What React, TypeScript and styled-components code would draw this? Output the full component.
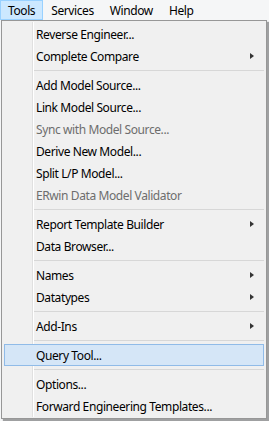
import React from "react";
import styled, { createGlobalStyle } from "styled-components";

type Entry =
  | { kind: "sep" }
  | { kind: "item"; label: string; sub?: boolean; disabled?: boolean; active?: boolean };

const entries: Entry[] = [
  { kind: "item", label: "Reverse Engineer..." },
  { kind: "item", label: "Complete Compare", sub: true },
  { kind: "sep" },
  { kind: "item", label: "Add Model Source..." },
  { kind: "item", label: "Link Model Source..." },
  { kind: "item", label: "Sync with Model Source...", disabled: true },
  { kind: "item", label: "Derive New Model..." },
  { kind: "item", label: "Split L/P Model..." },
  { kind: "item", label: "ERwin Data Model Validator", disabled: true },
  { kind: "sep" },
  { kind: "item", label: "Report Template Builder", sub: true },
  { kind: "item", label: "Data Browser..." },
  { kind: "sep" },
  { kind: "item", label: "Names", sub: true },
  { kind: "item", label: "Datatypes", sub: true },
  { kind: "sep" },
  { kind: "item", label: "Add-Ins", sub: true },
  { kind: "sep" },
  { kind: "item", label: "Query Tool...", active: true },
  { kind: "sep" },
  { kind: "item", label: "Options..." },
  { kind: "item", label: "Forward Engineering Templates..." },
];

const GlobalStyle = createGlobalStyle`
  html, body {
    margin: 0;
    padding: 0;
    background: #f5f6f7;
    font-family: "Noto Sans", "Noto Sans CJK KR", sans-serif;
    font-size: 12px;
    letter-spacing: -0.4px;
  }
`;

const Page = styled.div`
  width: 269px;
  height: 421px;
  overflow: hidden;
  background: #f5f6f7;
`;

const MenuBar = styled.div`
  display: flex;
  height: 20px;
  background: #f5f6f7;
`;

const BarItem = styled.div<{ $open?: boolean }>`
  box-sizing: border-box;
  height: 20px;
  padding: 0 7px;
  display: flex;
  align-items: center;
  color: #000;
  background: ${(p) => (p.$open ? "#cce8ff" : "transparent")};
  border: 1px solid ${(p) => (p.$open ? "#99d1ff" : "transparent")};
`;

const Popup = styled.div`
  box-sizing: border-box;
  width: 266px;
  margin-left: 1px;
  padding: 2px 2px 1px;
  background: #f0f0f0;
  border: 1px solid #979797;
  box-shadow: 2px 2px 1px rgba(0, 0, 0, 0.35);
  position: relative;
`;

const Gutter = styled.div`
  position: absolute;
  left: 30px;
  top: 1px;
  bottom: 1px;
  width: 1px;
  background: #e0e0e0;
  border-right: 1px solid #fff;
`;

const Row = styled.div<{ $active?: boolean; $disabled?: boolean }>`
  box-sizing: border-box;
  height: 22px;
  display: flex;
  align-items: center;
  padding-left: 31px;
  padding-right: 9px;
  color: ${(p) => (p.$disabled ? "#6d6d6d" : "#000")};
  background: ${(p) => (p.$active ? "#d5e6f7" : "transparent")};
  border: 1px solid ${(p) => (p.$active ? "#90bbe8" : "transparent")};
  position: relative;
`;

const Label = styled.span`
  flex: 1;
  white-space: nowrap;
`;

const Arrow = styled.span`
  width: 0;
  height: 0;
  border-top: 3.5px solid transparent;
  border-bottom: 3.5px solid transparent;
  border-left: 4px solid #333;
`;

const Separator = styled.div`
  height: 7px;
  display: flex;
  align-items: center;
  padding-left: 29px;
  &::after {
    content: "";
    flex: 1;
    height: 1px;
    background: #d7d7d7;
  }
`;

export default function App() {
  return (
    <Page>
      <GlobalStyle />
      <MenuBar>
        <BarItem $open>Tools</BarItem>
        <BarItem>Services</BarItem>
        <BarItem>Window</BarItem>
        <BarItem>Help</BarItem>
      </MenuBar>
      <Popup>
        <Gutter />
        {entries.map((e, i) =>
          e.kind === "sep" ? (
            <Separator key={i} />
          ) : (
            <Row key={i} $active={e.active} $disabled={e.disabled}>
              <Label>{e.label}</Label>
              {e.sub && <Arrow />}
            </Row>
          )
        )}
      </Popup>
    </Page>
  );
}
